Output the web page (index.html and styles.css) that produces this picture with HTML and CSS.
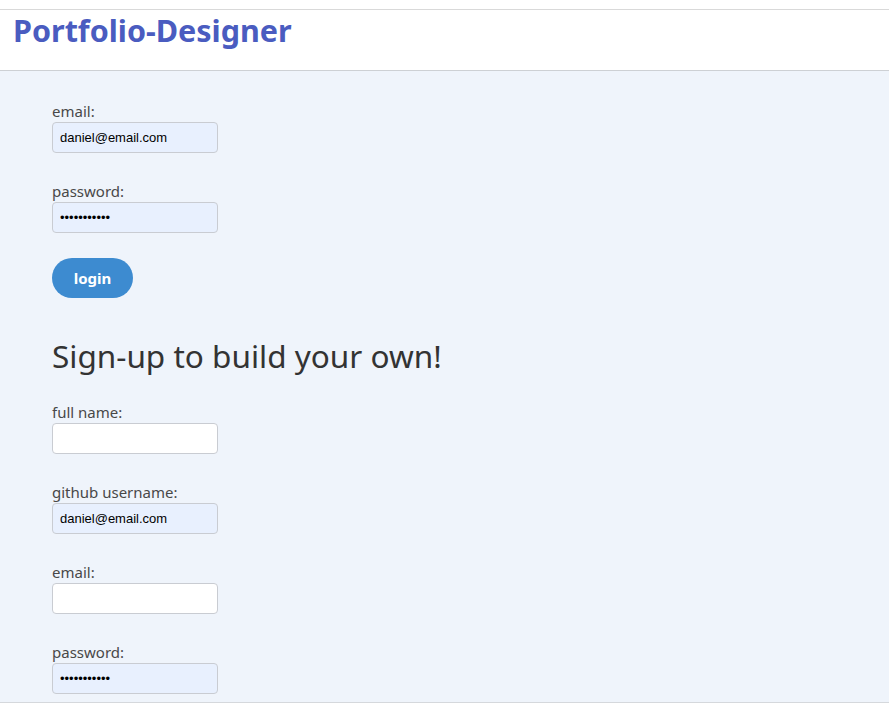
FILE: index.html
```html
<!DOCTYPE html>
<html lang="en">
<head>
<meta charset="utf-8">
<title>Portfolio-Designer</title>
<link rel="stylesheet" href="styles.css">
</head>
<body>
<div class="frame">
  <div class="topstrip"></div>
  <header class="header">
    <h1 class="brand">Portfolio-Designer</h1>
  </header>
  <main class="main">
    <form class="form">
      <div class="field">
        <label class="label">email:</label>
        <input class="input filled" type="text" value="daniel@email.com">
      </div>
      <div class="field">
        <label class="label">password:</label>
        <input class="input filled" type="password" value="password123">
      </div>
      <button class="btn" type="button">login</button>
    </form>
    <h2 class="subtitle">Sign-up to build your own!</h2>
    <form class="form">
      <div class="field">
        <label class="label">full name:</label>
        <input class="input" type="text" value="">
      </div>
      <div class="field">
        <label class="label">github username:</label>
        <input class="input filled" type="text" value="daniel@email.com">
      </div>
      <div class="field">
        <label class="label">email:</label>
        <input class="input" type="text" value="">
      </div>
      <div class="field">
        <label class="label">password:</label>
        <input class="input filled" type="password" value="password123">
      </div>
    </form>
  </main>
  <div class="bottomstrip"></div>
</div>
</body>
</html>
```
FILE: styles.css
```css
html, body {
  margin: 0;
  padding: 0;
  background: #ffffff;
}
body {
  font-family: "Noto Sans", "Open Sans", sans-serif;
  color: #444;
}
.frame {
  height: 705px;
  display: flex;
  flex-direction: column;
  overflow: hidden;
}
.topstrip {
  height: 9px;
  border-bottom: 1px solid #d9d9d9;
  flex: none;
}
.header {
  height: 60px;
  border-bottom: 1px solid #cdd0d4;
  flex: none;
  padding-left: 13px;
}
.brand {
  margin: 0;
  font-size: 30.5px;
  font-weight: 700;
  color: #4a5cc0;
  line-height: 40px;
}
.main {
  flex: 1;
  background: #eff4fb;
  padding: 30px 0 0 52px;
  overflow: hidden;
}
.form {
  display: flex;
  flex-direction: column;
  align-items: flex-start;
  gap: 28px;
}
.field {
  display: flex;
  flex-direction: column;
  align-items: flex-start;
}
.label {
  font-size: 15px;
  line-height: 20px;
  color: #484848;
  margin-bottom: 1px;
  margin-top: 0;
}
.input {
  box-sizing: border-box;
  width: 166px;
  height: 31px;
  border: 1px solid #c9ccd2;
  border-radius: 4px;
  background: #ffffff;
  padding: 0 7px;
  font-family: "Liberation Sans", Arial, sans-serif;
  font-size: 13px;
  color: #000;
  margin: 0;
}
.input.filled {
  background: #e8f0fe;
}
.btn {
  margin-top: -3px;
  width: 81px;
  height: 40px;
  border: none;
  border-radius: 20px;
  background: #3d8bd0;
  color: #fff;
  font-family: "Noto Sans", sans-serif;
  font-weight: 700;
  font-size: 15px;
  cursor: pointer;
}
.subtitle {
  margin: 38px 0 26px;
  font-size: 31.5px;
  font-weight: 400;
  line-height: 40px;
  color: #333;
}
.bottomstrip {
  height: 2px;
  border-top: 1px solid #d5d8dc;
  flex: none;
}
```
